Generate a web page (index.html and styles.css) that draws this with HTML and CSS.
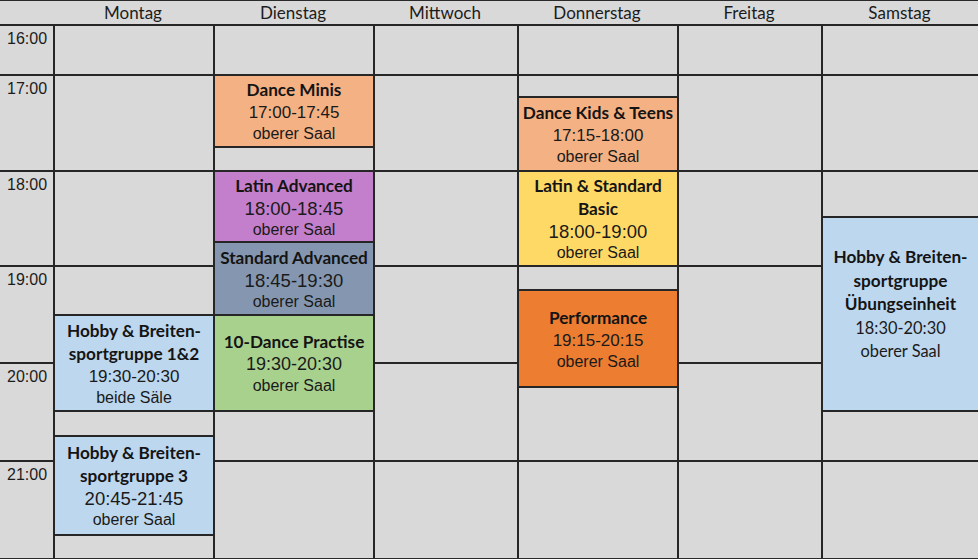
FILE: index.html
```html
<!DOCTYPE html>
<html lang="de">
<head>
<meta charset="utf-8">
<title>Stundenplan</title>
<link rel="stylesheet" href="styles.css">
</head>
<body>
<div class="sheet">
  <div class="head">
    <div class="hcell c-time"></div>
    <div class="hcell c-wide">Montag</div>
    <div class="hcell c-wide">Dienstag</div>
    <div class="hcell c-narrow">Mittwoch</div>
    <div class="hcell c-wide">Donnerstag</div>
    <div class="hcell c-narrow">Freitag</div>
    <div class="hcell c-last">Samstag</div>
  </div>
  <div class="body">
    <div class="col c-time">
      <div class="cell hour" style="height:50px">16:00</div>
      <div class="cell hour" style="height:96px">17:00</div>
      <div class="cell hour" style="height:95px">18:00</div>
      <div class="cell hour" style="height:97px">19:00</div>
      <div class="cell hour" style="height:98px">20:00</div>
      <div class="cell hour" style="height:98px">21:00</div>
    </div>

    <div class="col day c-wide">
      <div class="cell" style="height:50px"></div>
      <div class="cell" style="height:96px"></div>
      <div class="cell" style="height:95px"></div>
      <div class="cell" style="height:49px"></div>
      <div class="cell ev blue" style="height:96px">
        <div class="tt">Hobby &amp; Breiten-</div>
        <div class="tt">sportgruppe 1&amp;2</div>
        <div class="tm">19:30-20:30</div>
        <div class="rm">beide Säle</div>
      </div>
      <div class="cell" style="height:25px"></div>
      <div class="cell ev blue" style="height:99px">
        <div class="tt">Hobby &amp; Breiten-</div>
        <div class="tt">sportgruppe 3</div>
        <div class="tm lg">20:45-21:45</div>
        <div class="rm">oberer Saal</div>
      </div>
      <div class="cell" style="height:24px"></div>
    </div>

    <div class="col day c-wide">
      <div class="cell" style="height:50px"></div>
      <div class="cell ev peach" style="height:72px">
        <div class="tt">Dance Minis</div>
        <div class="tm">17:00-17:45</div>
        <div class="rm">oberer Saal</div>
      </div>
      <div class="cell" style="height:24px"></div>
      <div class="cell ev purple" style="height:71px">
        <div class="tt">Latin Advanced</div>
        <div class="tm lg">18:00-18:45</div>
        <div class="rm">oberer Saal</div>
      </div>
      <div class="cell ev slate" style="height:73px">
        <div class="tt">Standard Advanced</div>
        <div class="tm lg">18:45-19:30</div>
        <div class="rm">oberer Saal</div>
      </div>
      <div class="cell ev green" style="height:96px">
        <div class="tt">10-Dance Practise</div>
        <div class="tm md">19:30-20:30</div>
        <div class="rm">oberer Saal</div>
      </div>
      <div class="cell" style="height:50px"></div>
      <div class="cell" style="height:98px"></div>
    </div>

    <div class="col day c-narrow">
      <div class="cell" style="height:50px"></div>
      <div class="cell" style="height:96px"></div>
      <div class="cell" style="height:95px"></div>
      <div class="cell" style="height:97px"></div>
      <div class="cell" style="height:98px"></div>
      <div class="cell" style="height:98px"></div>
    </div>

    <div class="col day c-wide">
      <div class="cell" style="height:50px"></div>
      <div class="cell" style="height:22px"></div>
      <div class="cell ev peach" style="height:74px">
        <div class="tt">Dance Kids &amp; Teens</div>
        <div class="tm">17:15-18:00</div>
        <div class="rm">oberer Saal</div>
      </div>
      <div class="cell ev yellow" style="height:95px">
        <div class="tt">Latin &amp; Standard</div>
        <div class="tt">Basic</div>
        <div class="tm lg">18:00-19:00</div>
        <div class="rm">oberer Saal</div>
      </div>
      <div class="cell" style="height:24px"></div>
      <div class="cell ev orange" style="height:97px">
        <div class="tt">Performance</div>
        <div class="tm">19:15-20:15</div>
        <div class="rm">oberer Saal</div>
      </div>
      <div class="cell" style="height:74px"></div>
      <div class="cell" style="height:98px"></div>
    </div>

    <div class="col day c-narrow">
      <div class="cell" style="height:50px"></div>
      <div class="cell" style="height:96px"></div>
      <div class="cell" style="height:95px"></div>
      <div class="cell" style="height:97px"></div>
      <div class="cell" style="height:98px"></div>
      <div class="cell" style="height:98px"></div>
    </div>

    <div class="col day c-last">
      <div class="cell" style="height:50px"></div>
      <div class="cell" style="height:96px"></div>
      <div class="cell" style="height:46px"></div>
      <div class="cell ev blue sat" style="height:194px">
        <div class="tt">Hobby &amp; Breiten-</div>
        <div class="tt">sportgruppe</div>
        <div class="tt">Übungseinheit</div>
        <div class="ct">18:30-20:30</div>
        <div class="ct">oberer Saal</div>
      </div>
      <div class="cell" style="height:50px"></div>
      <div class="cell" style="height:98px"></div>
    </div>
  </div>
</div>
</body>
</html>
```

FILE: styles.css
```css
* { box-sizing: border-box; }

html, body {
  margin: 0;
  padding: 0;
  background: #d9d9d9;
}

.sheet {
  width: 978px;
  height: 559px;
  overflow: hidden;
  background: #d9d9d9;
  color: #161616;
}

.head {
  display: flex;
  height: 24px;
  border-top: 1px solid #2a2a2a;
}

.hcell {
  font-family: "Lato", "Open Sans", sans-serif;
  font-size: 17px;
  line-height: 23px;
  text-align: center;
  color: #1c1c1c;
}

.c-time { width: 53px; }
.c-wide { width: 160px; }
.c-narrow { width: 144px; }
.c-last { width: 157px; }

.body {
  display: flex;
  height: 535px;
  border-bottom: 1px solid #2a2a2a;
}

.col {
  display: flex;
  flex-direction: column;
  flex: none;
}

.day {
  border-left: 2px solid #262626;
}

.cell {
  flex: none;
  border-top: 2px solid #262626;
  background: #d9d9d9;
}

.hour {
  font-family: "Liberation Sans", Arial, sans-serif;
  font-size: 16px;
  line-height: 18px;
  padding: 4px 0 0 7px;
  color: #1c1c1c;
}

.ev {
  display: flex;
  flex-direction: column;
  justify-content: center;
  align-items: center;
  text-align: center;
  white-space: nowrap;
}

.tt {
  font-family: "Lato", "Open Sans", sans-serif;
  font-weight: 700;
  font-size: 17.2px;
  line-height: 23px;
  color: #141414;
}

.tm {
  font-family: "Liberation Sans", Arial, sans-serif;
  font-size: 17px;
  line-height: 23px;
  color: #1a1a1a;
}

.tm.md { font-size: 18px; }
.tm.lg { font-size: 18.5px; }

.rm {
  font-family: "Liberation Sans", Arial, sans-serif;
  font-size: 16px;
  line-height: 20px;
  color: #1a1a1a;
}

.ct {
  font-family: "Lato", "Open Sans", sans-serif;
  font-size: 16.4px;
  line-height: 23.5px;
  color: #1a1a1a;
}

.sat { padding-bottom: 20px; }
.sat .tt { line-height: 23.5px; }

.peach { background: #f4b183; }
.purple { background: #c47fcc; }
.slate { background: #8597b0; }
.green { background: #a9d18e; }
.blue { background: #bdd7ee; }
.yellow { background: #ffd966; }
.orange { background: #ed7d31; }
```
